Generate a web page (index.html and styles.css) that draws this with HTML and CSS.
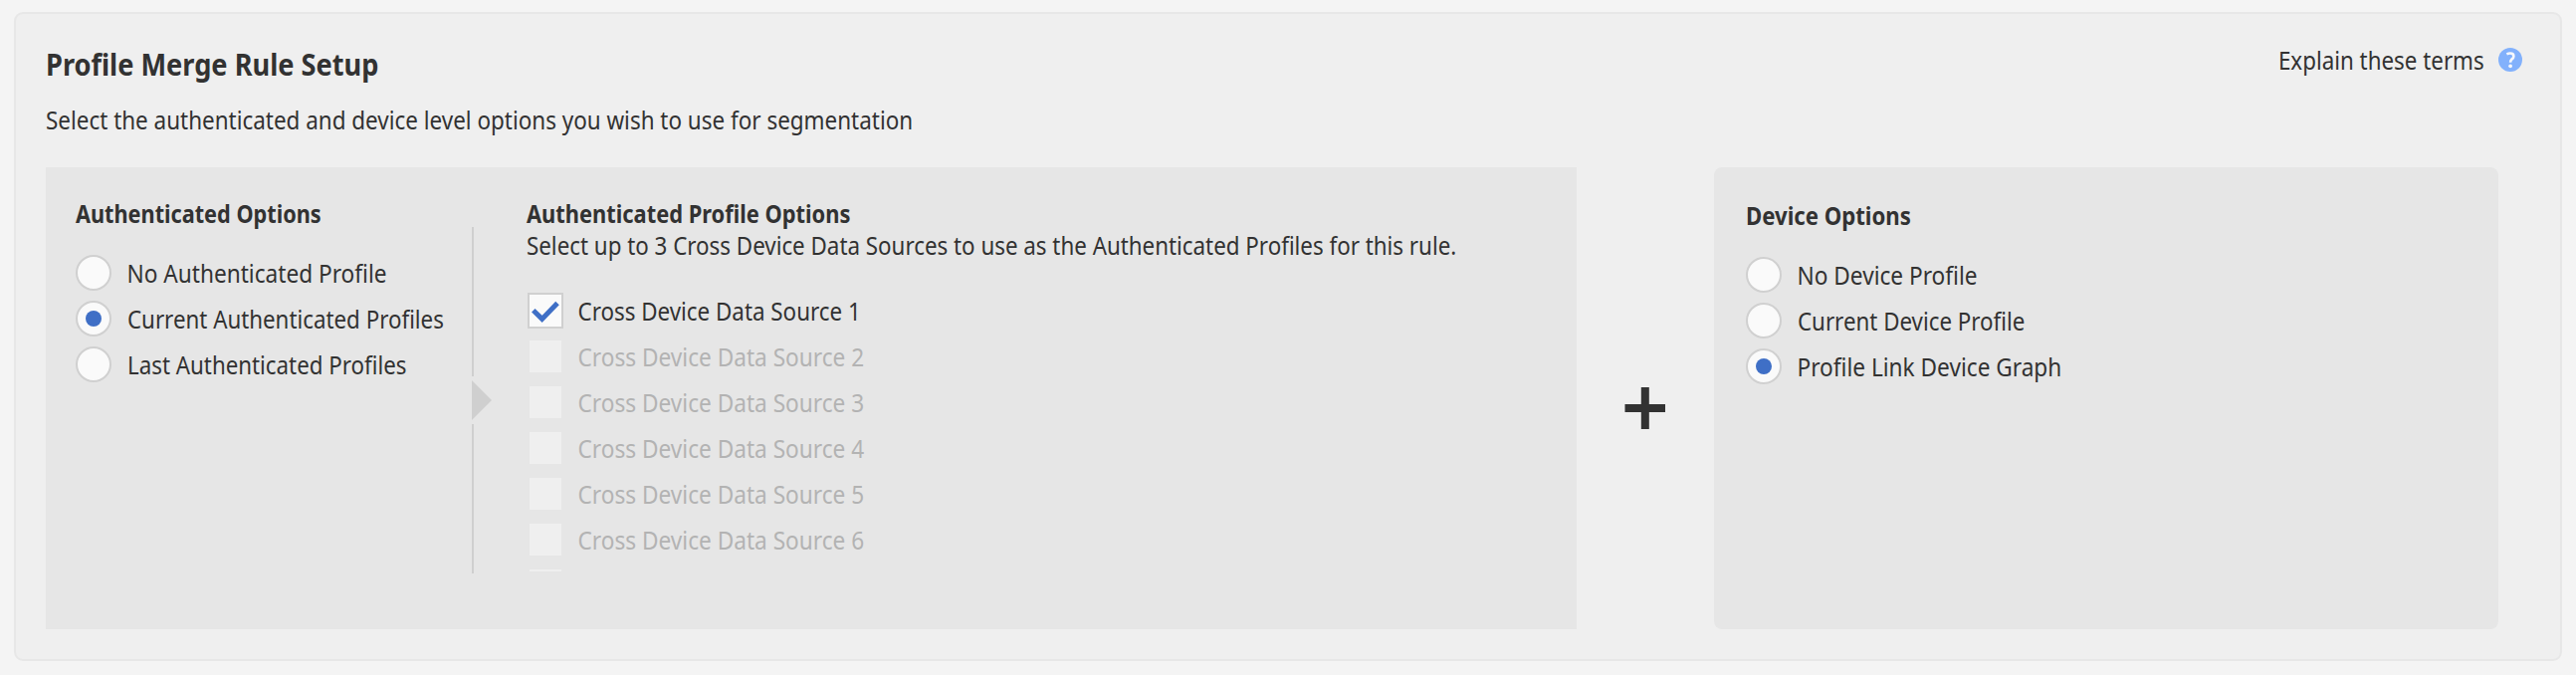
FILE: index.html
```html
<!DOCTYPE html>
<html lang="en">
<head>
<meta charset="utf-8">
<title>Profile Merge Rule Setup</title>
<link rel="stylesheet" href="styles.css">
</head>
<body>
<main class="card">
  <header class="header">
    <h1 class="title">Profile Merge Rule Setup</h1>
    <div class="help">
      <span class="text">Explain these terms</span>
      <svg class="help-icon" viewBox="0 0 24 24"><circle cx="12" cy="12" r="12" fill="#82b1fc"/><path d="M8.4 6.3Q10 5.5 12 5.5Q15.4 5.5 15.4 8.4Q15.4 10 13.6 11.4Q12.1 12.6 12.1 14.8" fill="none" stroke="#f6f8fc" stroke-width="2.6"/><circle cx="12.1" cy="18.3" r="1.9" fill="#f6f8fc"/></svg>
    </div>
  </header>
  <p class="intro text">Select the authenticated and device level options you wish to use for segmentation</p>
  <div class="panels">
    <section class="panel auth">
      <div class="auth-options">
        <h2 class="heading">Authenticated Options</h2>
        <ul class="options">
          <li class="option"><span class="radio"></span><span class="text">No Authenticated Profile</span></li>
          <li class="option"><span class="radio checked"></span><span class="text w-current">Current Authenticated Profiles</span></li>
          <li class="option"><span class="radio"></span><span class="text w-current">Last Authenticated Profiles</span></li>
        </ul>
      </div>
      <div class="divider">
        <span class="line"></span>
        <svg class="arrow" viewBox="0 0 20 40"><path d="M0 0L20 20L0 40Z" fill="#cfcfcf"/></svg>
        <span class="line"></span>
      </div>
      <div class="profile-options">
        <h2 class="heading">Authenticated Profile Options</h2>
        <p class="note text">Select up to 3 Cross Device Data Sources to use as the Authenticated Profiles for this rule.</p>
        <ul class="options sources">
          <li class="option"><span class="checkbox on"><svg viewBox="0 0 32 32"><path d="M3.8 15.8L12.6 24.4L28 8.5" fill="none" stroke="#3f6fc6" stroke-width="5"/></svg></span><span class="text w-first">Cross Device Data Source 1</span></li>
          <li class="option disabled"><span class="checkbox"></span><span class="text">Cross Device Data Source 2</span></li>
          <li class="option disabled"><span class="checkbox"></span><span class="text">Cross Device Data Source 3</span></li>
          <li class="option disabled"><span class="checkbox"></span><span class="text">Cross Device Data Source 4</span></li>
          <li class="option disabled"><span class="checkbox"></span><span class="text">Cross Device Data Source 5</span></li>
          <li class="option disabled"><span class="checkbox"></span><span class="text">Cross Device Data Source 6</span></li>
          <li class="option disabled"><span class="checkbox"></span></li>
        </ul>
      </div>
    </section>
    <div class="plus">
      <svg class="plus-icon" viewBox="0 0 42 42"><path d="M0.5 21H41M20.8 0V42" stroke="#323232" stroke-width="8" fill="none"/></svg>
    </div>
    <section class="panel device">
      <h2 class="heading">Device Options</h2>
      <ul class="options">
        <li class="option"><span class="radio"></span><span class="text">No Device Profile</span></li>
        <li class="option"><span class="radio"></span><span class="text w-current">Current Device Profile</span></li>
        <li class="option"><span class="radio checked"></span><span class="text">Profile Link Device Graph</span></li>
      </ul>
    </section>
  </div>
</main>
</body>
</html>
```
FILE: styles.css
```css
* { box-sizing: border-box; margin: 0; padding: 0; }
body {
  height: 678px;
  padding: 12px 14px 14px;
  background: #f4f4f4;
  color: #323232;
  font: 24.5px/32px "Noto Sans", sans-serif;
  overflow: hidden;
}
ul { list-style: none; }
svg { display: block; }
.card {
  height: 652px;
  padding: 28px 34px 0 30px;
  background: #efefef;
  border: 2px solid #e7e7e7;
  border-radius: 9px;
}
.text, .title, .heading { white-space: nowrap; transform-origin: 0 50%; }
.text { transform: translateY(1px) scaleX(.918); }
.header { display: flex; justify-content: space-between; height: 44px; }
.title { font-size: 30.3px; line-height: 44px; transform: translateY(1px) scaleX(.897); }
.help { display: flex; gap: 14px; padding-top: 3px; }
.help .text { transform: scaleX(.912); transform-origin: 100% 50%; }
.help-icon { width: 24px; height: 24px; margin: 3px 4px 0 0; }
.intro { line-height: 36px; margin-top: 16px; transform: translateY(1px) scaleX(.916); }
.panels { display: flex; height: 464px; margin-top: 30px; }
.panel { background: #e6e6e6; }
.auth { display: flex; width: 1538px; }
.heading { font-size: 24.5px; line-height: 32px; transform: translateY(1px) scaleX(.892); }
.auth-options { width: 428px; padding: 30px 0 0 30px; }
.auth-options .heading { transform: translateY(1px) scaleX(.885); }
.auth-options .options { margin-top: 26px; }
.option { display: flex; align-items: center; gap: 15px; height: 36px; margin-bottom: 10px; }
.radio {
  flex: none;
  display: grid;
  place-items: center;
  width: 36px;
  height: 36px;
  border: 2px solid #d0d0d0;
  border-radius: 50%;
  background: #fafafa;
}
.checked::after { content: ""; width: 16px; height: 16px; border-radius: 50%; background: #3f6fc6; }
.option .text { transform: translate(.5px, 1px) scaleX(.924); }
.option .w-current { transform: translate(1px, 1px) scaleX(.911); }
.option .w-first { transform: translate(.5px, 1px) scaleX(.913); }
.divider { display: flex; flex-direction: column; gap: 4px; width: 20px; height: 348px; margin-top: 60px; }
.line { flex: 1; width: 2px; background: #cfcfcf; }
.arrow { width: 20px; height: 40px; }
.profile-options { padding: 30px 0 0 35px; }
.note { line-height: 32px; transform: translateY(1px) scaleX(.912); }
.sources { height: 280px; margin: 32px 0 0 1px; overflow: hidden; }
.sources .option { gap: 14px; }
.checkbox { flex: none; width: 36px; height: 36px; border: 2px solid transparent; background: #efefef; background-clip: padding-box; }
.on { border-color: #d0d0d0; background: #fafafa; }
.disabled { color: #b3b3b3; }
.plus { display: flex; align-items: center; width: 138px; padding: 20px 0 0 48px; }
.plus-icon { width: 42px; height: 42px; }
.device { width: 788px; padding: 32px 0 0 32px; border-radius: 8px; }
.device .heading { transform: translateY(1px) scaleX(.904); }
.device .options { margin-top: 26px; }
```
